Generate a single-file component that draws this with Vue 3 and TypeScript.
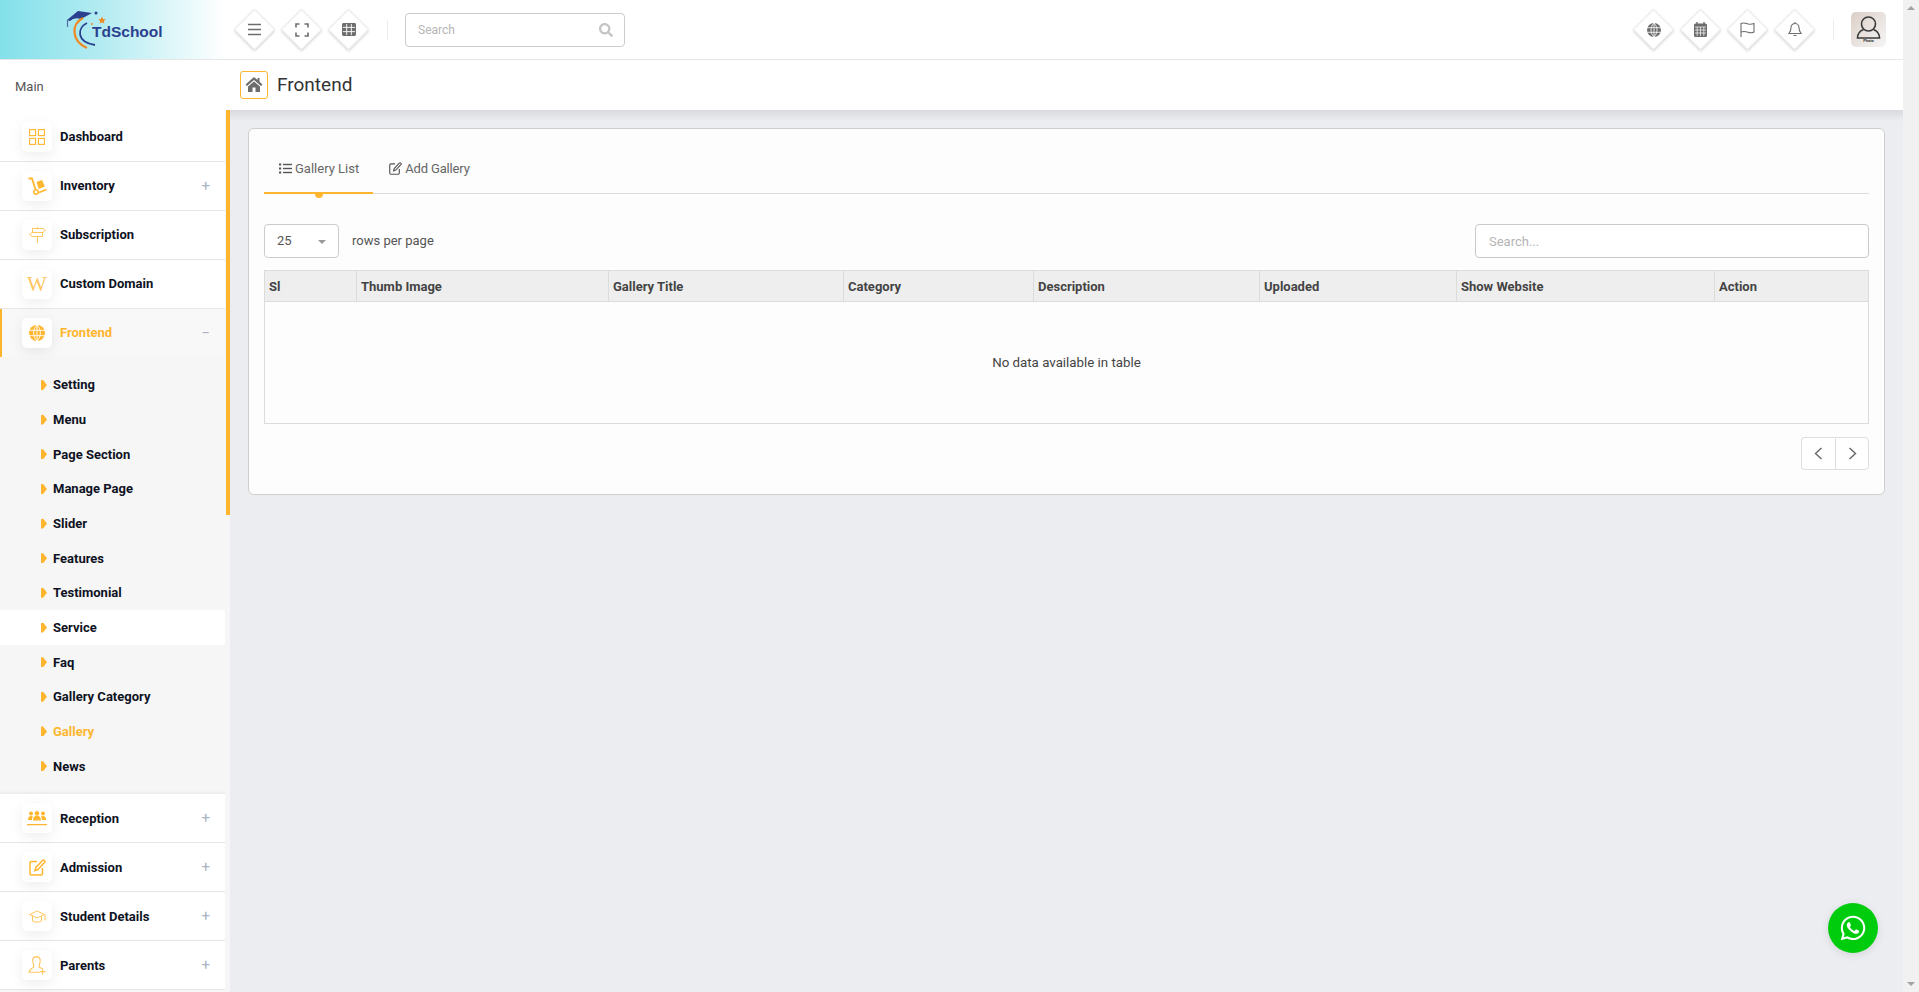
<script setup lang="ts">
type Item = { label: string; icon: string; toggle?: string; active?: boolean };

const topItems: Item[] = [
  { label: 'Dashboard', icon: 'grid' },
  { label: 'Inventory', icon: 'cart', toggle: '+' },
  { label: 'Subscription', icon: 'sign' },
  { label: 'Custom Domain', icon: 'wiki' },
  { label: 'Frontend', icon: 'globe', toggle: '−', active: true },
];
const subItems = ['Setting', 'Menu', 'Page Section', 'Manage Page', 'Slider', 'Features', 'Testimonial', 'Service', 'Faq', 'Gallery Category', 'Gallery', 'News'];
const bottomItems: Item[] = [
  { label: 'Reception', icon: 'people', toggle: '+' },
  { label: 'Admission', icon: 'edit', toggle: '+' },
  { label: 'Student Details', icon: 'cap', toggle: '+' },
  { label: 'Parents', icon: 'parent', toggle: '+' },
];
const columns = ['Sl', 'Thumb Image', 'Gallery Title', 'Category', 'Description', 'Uploaded', 'Show Website', 'Action'];
const columnWidths = [92, 252, 235, 190, 226, 197, 258, 154];
</script>

<template>
  <div class="app">
    <div class="page">
      <header class="topbar">
        <div class="brand">
          <svg class="logo" width="110" height="50" viewBox="0 0 110 50">
            <path d="M3 16 L14 7 L28 9 L17 15 Q10 13 6 17 Z" fill="#2b418f" />
            <path d="M3.500 16 V23" stroke="#5a6aa8" stroke-width="1.200" fill="none" />
            <path d="M19 14 C7 20 7 37 23 44" stroke="#ef8a22" stroke-width="2.200" fill="none" />
            <path d="M23 19 C13 24 12 38 31 41" stroke="#2b418f" stroke-width="1.800" fill="none" />
            <circle cx="32" cy="9" r="1.500" fill="#2b418f" />
            <circle cx="28" cy="20" r="1" fill="#ef8a22" />
            <path d="M38 12.500 l1.100 2.400 2.600.3 -1.900 1.800 .5 2.600 -2.300 -1.300 -2.300 1.300 .5 -2.600 -1.900 -1.800 2.600 -.3 z" fill="#ef8a22" />
            <text x="28" y="33" class="logo-text">TdSchool</text>
          </svg>
        </div>
        <div class="top-tools">
          <div class="tool-group">
            <button class="diamond">
              <svg width="15" height="15" viewBox="0 0 15 15"><path d="M1 2.500h13M1 7.500h13M1 12.500h13" stroke="#6d6d6d" stroke-width="1.600" fill="none" /></svg>
            </button>
            <button class="diamond">
              <svg width="14" height="14" viewBox="0 0 14 14"><path d="M1 4.500V1h3.500M9.500 1H13v3.500M13 9.500V13H9.500M4.500 13H1V9.500" stroke="#6d6d6d" stroke-width="1.600" fill="none" /></svg>
            </button>
            <button class="diamond">
              <svg width="14" height="13" viewBox="0 0 15 14"><rect width="15" height="14" rx="1.500" fill="#6d6d6d" /><path d="M5 1v12M10 1v12M1 4.700h13M1 9.300h13" stroke="#fff" stroke-width="1" /></svg>
            </button>
          </div>
          <span class="vline search-line"></span>
          <label class="top-search">
            <input type="text" placeholder="Search" />
            <svg width="14" height="14" viewBox="0 0 512 512"><path fill="#c4c4c4" d="M505 442.700L405.300 343c-4.500-4.500-10.600-7-17-7H372c27.600-35.300 44-79.700 44-128C416 93.100 322.900 0 208 0S0 93.100 0 208s93.100 208 208 208c48.300 0 92.700-16.400 128-44v16.300c0 6.400 2.500 12.500 7 17l99.700 99.700c9.400 9.400 24.600 9.400 33.900 0l28.300-28.300c9.400-9.400 9.400-24.600.1-34zM208 336c-70.700 0-128-57.200-128-128 0-70.700 57.200-128 128-128 70.700 0 128 57.200 128 128 0 70.700-57.200 128-128 128z" /></svg>
          </label>
          <div class="tool-group push">
            <button class="diamond">
              <svg width="14" height="14" viewBox="0 0 14 14"><circle cx="7" cy="7" r="7" fill="#6d6d6d" /><path d="M0 4.700h14M0 9.300h14M7 0v14M7 0C3 4 3 10 7 14M7 0c4 4 4 10 0 14" stroke="#fff" stroke-width=".8" fill="none" /></svg>
            </button>
            <button class="diamond">
              <svg width="13" height="15" viewBox="0 0 13 15"><rect y="1.500" width="13" height="13.500" rx="1.500" fill="#6d6d6d" /><path d="M3 0v3M10 0v3" stroke="#6d6d6d" stroke-width="1.400" /><path d="M1 5h11M1 8h11M1 11h11M3.200 5v9M6.500 5v9M9.800 5v9" stroke="#fff" stroke-width=".7" /></svg>
            </button>
            <button class="diamond">
              <svg width="15" height="15" viewBox="0 0 15 15"><path d="M1 15V1.500c3-1.500 5 0 7 .5s4 .3 6-.5v8.500c-2 1-4 1-6 .3s-4-1.300-7-.3" stroke="#6d6d6d" stroke-width="1.100" fill="none" /></svg>
            </button>
            <button class="diamond">
              <svg width="14" height="15" viewBox="0 0 14 15"><path d="M7 1.500a4 4 0 0 0-4 4c0 4-1.500 5-2.200 6h12.400c-.7-1-2.200-2-2.200-6a4 4 0 0 0-4-4zM7 0v1.500M5.500 13.500h3" stroke="#6d6d6d" stroke-width="1.100" fill="none" /></svg>
            </button>
          </div>
          <span class="vline avatar-line"></span>
          <div class="avatar">
            <svg width="25" height="23" viewBox="0 0 25 23"><circle cx="12.500" cy="8" r="7" stroke="#3b3b3b" stroke-width="1.600" fill="none" /><path d="M7.500 13.500C4 15 1.500 18.500 1.500 22h22c0-3.500-2.500-7-6-8.500" stroke="#3b3b3b" stroke-width="1.600" fill="none" /></svg>
            <span class="photo">Photo</span>
          </div>
        </div>
      </header>

      <div class="body">
        <aside class="sidebar">
          <span class="side-thumb"></span>
          <div class="main-label">Main</div>
          <a v-for="item in topItems" :key="item.label" class="nav-row" :class="{ active: item.active }">
            <span class="nav-icon">
              <svg v-if="item.icon === 'grid'" width="16" height="16" viewBox="0 0 16 16" fill="none" stroke="#ffb62e" stroke-width="1.100"><rect x=".6" y=".6" width="6" height="6" /><rect x="9.400" y=".6" width="6" height="6" /><rect x=".6" y="9.400" width="6" height="6" /><rect x="9.400" y="9.400" width="6" height="6" /></svg>
              <svg v-else-if="item.icon === 'cart'" width="19" height="18" viewBox="0 0 19 18"><path d="M0.500 1.500H4L7.500 12.500" stroke="#ffb62e" stroke-width="1.800" fill="none" /><circle cx="8" cy="15" r="2.200" stroke="#ffb62e" stroke-width="1.500" fill="none" /><path d="M11 15.500L18.500 12.500" stroke="#ffb62e" stroke-width="1.600" /><path d="M8.500 5L14 3l2.800 6.500-6 2.500z" fill="#ffb62e" /></svg>
              <svg v-else-if="item.icon === 'sign'" width="17" height="16" viewBox="0 0 17 16" fill="none" stroke="#ffc65c" stroke-width="1"><path d="M3.500 1.500h10.500l2.500 2-2.500 2H3.500zM13.500 5.500H3l-2.500 2 2.500 2h10.500zM8.500 0v1.500M8.500 9.500V16" /></svg>
              <span v-else-if="item.icon === 'wiki'" class="wiki">W</span>
              <svg v-else-if="item.icon === 'globe'" width="16" height="16" viewBox="0 0 16 16"><circle cx="8" cy="8" r="8" fill="#ffb62e" /><path d="M0 5.300h16M0 10.700h16M8 0v16M8 0C3.500 4.500 3.500 11.500 8 16M8 0c4.500 4.500 4.500 11.500 0 16" stroke="#fff" stroke-width=".9" fill="none" /></svg>
            </span>
            <span class="nav-label">{{ item.label }}</span>
            <span v-if="item.toggle" class="nav-toggle">{{ item.toggle }}</span>
          </a>
          <ul class="sub-list">
            <li v-for="sub in subItems" :key="sub" class="sub-item" :class="{ hover: sub === 'Service', current: sub === 'Gallery' }">
              <i class="marker"></i>{{ sub }}
            </li>
          </ul>
          <a v-for="item in bottomItems" :key="item.label" class="nav-row lower">
            <span class="nav-icon">
              <svg v-if="item.icon === 'people'" width="20" height="15" viewBox="0 0 20 15"><g fill="#ffb62e"><circle cx="4" cy="2.500" r="2" /><circle cx="10" cy="2.200" r="2.200" /><circle cx="16" cy="2.500" r="2" /><path d="M1 9c0-3 1-4 3-4 1 0 1.500.3 2 .8C5.200 6.500 5 8 5 9zM6 9.500c0-3 1.500-5 4-5s4 2 4 5zM19 9c0-3-1-4-3-4-1 0-1.500.3-2 .8.800.7 1 2.200 1 3.200zM0 13h20v1.300H0z" /></g></svg>
              <svg v-else-if="item.icon === 'edit'" width="17" height="17" viewBox="0 0 17 17" fill="none" stroke="#ffb62e" stroke-width="1.500"><path d="M8 2.500H2.500a1.500 1.500 0 0 0-1.500 1.500v10.500A1.500 1.500 0 0 0 2.500 16H12a1.500 1.500 0 0 0 1.500-1.500V9" /><path d="M6 11.500l.8-3L13.500 1.500a1.300 1.300 0 0 1 2 2L8.900 10.500z" /></svg>
              <svg v-else-if="item.icon === 'cap'" width="17" height="13" viewBox="0 0 17 13" fill="none" stroke="#ffc65c" stroke-width="1"><path d="M.5 4.500L8 1l7.500 3.500L8 8zM3.500 6v5c3 1.500 6 1.500 9 0V6M16 4.500v6" /></svg>
              <svg v-else-if="item.icon === 'parent'" width="18" height="19" viewBox="0 0 16 17" fill="none" stroke="#ffc65c" stroke-width="1"><path d="M5 10V8C3.500 5 3.500 1 7.500 .6 11.500 1 11.500 5 10 8v2c1 .6 2 1 3 1.500M5 10c-2 1-3.500 1.500-4 4.500h9.500" /><path d="M13 11.500v5M10.500 14h5" /></svg>
            </span>
            <span class="nav-label">{{ item.label }}</span>
            <span class="nav-toggle">{{ item.toggle }}</span>
          </a>
        </aside>

        <div class="content-col">
          <div class="subheader">
            <span class="home-box">
              <svg width="18" height="17" viewBox="0 0 18 17"><path fill="#6d6d6d" d="M9 1L.5 8.500 2 10l7-6 7 6 1.500-1.500-3-2.700V2h-2v2zM3 10.500l6-5 6 5V16h-4.500v-4.500h-3V16H3z" /></svg>
            </span>
            <h1>Frontend</h1>
          </div>
          <main class="content">
            <section class="card">
              <nav class="tabs">
                <a class="tab current">
                  <svg width="13" height="11" viewBox="0 0 13 11"><g fill="#555"><rect y=".5" width="2.200" height="2" /><rect y="4.500" width="2.200" height="2" /><rect y="8.500" width="2.200" height="2" /><rect x="4" y=".8" width="9" height="1.400" /><rect x="4" y="4.800" width="9" height="1.400" /><rect x="4" y="8.800" width="9" height="1.400" /></g></svg>
                  Gallery List
                </a>
                <a class="tab">
                  <svg width="13" height="13" viewBox="0 0 17 17" fill="none" stroke="#555" stroke-width="1.500"><path d="M8 2.500H2.500a1.500 1.500 0 0 0-1.500 1.500v10.500A1.500 1.500 0 0 0 2.500 16H12a1.500 1.500 0 0 0 1.500-1.500V9" /><path d="M6 11.500l.8-3L13.500 1.500a1.300 1.300 0 0 1 2 2L8.900 10.500z" /></svg>
                  Add Gallery
                </a>
              </nav>
              <div class="controls">
                <div class="page-size">25<i class="caret"></i></div>
                <span class="rows-label">rows per page</span>
                <input class="table-search" type="text" placeholder="Search..." />
              </div>
              <table class="grid">
                <thead>
                  <tr>
                    <th v-for="(col, i) in columns" :key="col" :style="{ width: columnWidths[i] + 'px' }">{{ col }}</th>
                  </tr>
                </thead>
                <tbody>
                  <tr><td colspan="8">No data available in table</td></tr>
                </tbody>
              </table>
              <div class="pager">
                <button><svg width="9" height="13" viewBox="0 0 9 13"><path d="M7.500 1L1.500 6.500l6 5.500" stroke="#666" stroke-width="1.400" fill="none" /></svg></button>
                <button><svg width="9" height="13" viewBox="0 0 9 13"><path d="M1.500 1l6 5.500-6 5.500" stroke="#666" stroke-width="1.400" fill="none" /></svg></button>
              </div>
            </section>
          </main>
        </div>
      </div>
      <a class="whatsapp">
        <svg width="28" height="28" viewBox="0 0 448 512"><path fill="#fff" d="M380.900 97.100C339 55.100 283.200 32 223.900 32c-122.400 0-222 99.600-222 222 0 39.100 10.200 77.300 29.600 111L0 480l117.700-30.900c32.400 17.700 68.900 27 106.100 27h.1c122.300 0 224.100-99.600 224.100-222 0-59.300-25.200-115-67.100-157zm-157 341.600c-33.200 0-65.700-8.900-94-25.700l-6.700-4-69.800 18.300L72 359.200l-4.400-7c-18.500-29.400-28.200-63.300-28.200-98.200 0-101.700 82.800-184.500 184.600-184.500 49.300 0 95.600 19.200 130.400 54.100 34.800 34.900 56.200 81.200 56.100 130.500 0 101.800-84.900 184.600-186.600 184.600zm101.200-138.200c-5.500-2.800-32.800-16.200-37.900-18-5.100-1.900-8.800-2.800-12.500 2.800-3.700 5.600-14.300 18-17.600 21.800-3.200 3.700-6.500 4.200-12 1.400-32.600-16.300-54-29.100-75.500-66-5.700-9.800 5.700-9.100 16.300-30.300 1.800-3.700.9-6.900-.5-9.700-1.400-2.800-12.500-30.100-17.100-41.200-4.500-10.800-9.100-9.300-12.500-9.500-3.200-.2-6.900-.2-10.600-.2-3.700 0-9.700 1.400-14.800 6.900-5.100 5.600-19.400 19-19.400 46.300 0 27.300 19.900 53.700 22.600 57.400 2.800 3.700 39.100 59.700 94.800 83.800 35.200 15.200 49 16.500 66.600 13.900 10.700-1.600 32.800-13.400 37.400-26.400 4.600-13 4.600-24.100 3.200-26.400-1.300-2.500-5-3.900-10.500-6.600z" /></svg>
      </a>
    </div>
    <div class="scrollbar">
      <i class="arrow up"></i>
      <i class="arrow down"></i>
    </div>
  </div>
</template>

<style scoped>
.app {
  display: flex;
  width: 1919px;
  height: 992px;
  overflow: hidden;
  font-family: Roboto, "Noto Sans", sans-serif;
  color: #444;
  font-size: 14px;
}
.page {
  position: relative;
  flex: 1;
  min-width: 0;
  display: flex;
  flex-direction: column;
  background: #ecedf1;
}
.scrollbar {
  width: 16px;
  background: #f1f1f1;
  display: flex;
  flex-direction: column;
  justify-content: space-between;
  align-items: center;
  padding: 6px 0;
  box-sizing: border-box;
}
.arrow {
  width: 0;
  height: 0;
  border-left: 4px solid transparent;
  border-right: 4px solid transparent;
}
.arrow.up { border-bottom: 4px solid #a3a3a3; }
.arrow.down { border-top: 4px solid #a3a3a3; }

.topbar {
  flex: none;
  height: 60px;
  box-sizing: border-box;
  display: flex;
  background: #fff;
  border-bottom: 1px solid #e6e6e6;
}
.brand {
  flex: none;
  width: 234px;
  background: linear-gradient(90deg, #83e0ea 0%, #b5ecf2 45%, #fff 96%);
  padding: 4px 0 0 64px;
  box-sizing: border-box;
}
.logo { display: block; }
.logo-text {
  font-family: "Liberation Sans", sans-serif;
  font-weight: 700;
  font-size: 15.500px;
  fill: #2b418f;
}
.top-tools {
  flex: 1;
  display: flex;
  align-items: center;
  padding-right: 17px;
}
.tool-group {
  display: flex;
  gap: 6px;
}
.tool-group.push { margin-left: auto; }
.diamond {
  position: relative;
  width: 41px;
  height: 41px;
  padding: 0;
  border: 0;
  background: none;
  display: flex;
  align-items: center;
  justify-content: center;
}
.diamond::before {
  content: "";
  position: absolute;
  left: 6px;
  top: 6px;
  width: 29px;
  height: 29px;
  box-sizing: border-box;
  transform: rotate(45deg);
  background: #fff;
  border: 1px solid #eeeeee;
  box-shadow: 1px 1px 3px rgba(0, 0, 0, 0.16), 0 0 2px rgba(0, 0, 0, 0.08);
}
.diamond svg { position: relative; }
.vline {
  width: 1px;
  height: 20px;
  background: #ececec;
}
.search-line { margin: 0 17px 0 18px; }
.avatar-line { margin: 0 17px 0 18px; }
.top-search {
  width: 220px;
  height: 34px;
  box-sizing: border-box;
  border: 1px solid #ccc;
  border-radius: 4px;
  display: flex;
  align-items: center;
  padding: 0 11px 0 12px;
}
.top-search input {
  flex: 1;
  min-width: 0;
  border: 0;
  outline: 0;
  padding: 0;
  font: 12px Roboto, sans-serif;
  background: none;
}
.top-search input::placeholder { color: #b5b5b5; }
.avatar {
  position: relative;
  width: 35px;
  height: 35px;
  border-radius: 5px;
  background: linear-gradient(135deg, #dccfc8, #f5f5f5);
  display: flex;
  justify-content: center;
  padding-top: 4px;
  box-sizing: border-box;
}
.photo {
  position: absolute;
  left: 0;
  right: 0;
  bottom: 4px;
  text-align: center;
  font-size: 4px;
  font-weight: 700;
  line-height: 4px;
  color: #333;
}

.body {
  flex: 1;
  min-height: 0;
  display: flex;
}
.sidebar {
  position: relative;
  flex: none;
  width: 230px;
  background: #f6f6f6;
  overflow: hidden;
}
.side-thumb {
  position: absolute;
  left: 226px;
  top: 50px;
  width: 4px;
  height: 405px;
  background: #ffb62e;
}
.main-label {
  height: 53px;
  box-sizing: border-box;
  padding: 18px 15px 0;
  font-size: 13px;
  line-height: 17px;
  color: #555;
  background: #fff;
}
.nav-row {
  display: flex;
  align-items: center;
  width: 225px;
  height: 49px;
  box-sizing: border-box;
  border-bottom: 1px solid #e6e6e6;
  padding: 0 15px 0 22px;
  font-size: 13px;
  font-weight: 700;
  color: #0e1222;
  background: #fff;
}
.nav-icon {
  width: 30px;
  height: 30px;
  flex: none;
  border-radius: 5px;
  background: #fff;
  box-shadow: 0 4px 14px rgba(0, 0, 0, 0.07);
  display: flex;
  align-items: center;
  justify-content: center;
  margin-right: 8px;
}
.wiki {
  font-family: "Liberation Serif", serif;
  font-size: 21px;
  font-weight: 400;
  color: #ffc65c;
  line-height: 1;
}
.nav-label {
  flex: 1;
  padding-bottom: 1px;
}
.nav-row.lower .nav-label {
  padding-bottom: 0;
  padding-top: 1px;
}
.nav-toggle {
  color: #a9b3c4;
  font-size: 15px;
  font-weight: 400;
}
.nav-row.active {
  background: #f8f8f8;
  border-bottom: 0;
  box-shadow: inset 2px 0 0 #ffb62e;
  height: 48px;
}
.nav-row.active .nav-label { color: #ffb62e; }
.sub-list {
  list-style: none;
  margin: 0;
  width: 225px;
  padding: 10.600px 0 11px;
  background: #f6f6f6;
  box-shadow: inset 0 -4px 4px -4px rgba(0, 0, 0, 0.1);
}
.sub-item {
  height: 34.670px;
  display: flex;
  align-items: center;
  padding-left: 41px;
  font-size: 13px;
  font-weight: 700;
  color: #0e1222;
}
.sub-item.hover { background: #fff; }
.sub-item.current { color: #ffb62e; }
.marker {
  width: 6px;
  height: 10px;
  margin-right: 6px;
  background: #ffb62e;
  clip-path: polygon(0 0, 35% 0, 100% 50%, 35% 100%, 0 100%);
}

.content-col {
  flex: 1;
  min-width: 0;
  display: flex;
  flex-direction: column;
}
.subheader {
  flex: none;
  height: 50px;
  box-sizing: border-box;
  background: #fff;
  display: flex;
  align-items: center;
  padding-left: 10px;
  padding-bottom: 1px;
}
.home-box {
  width: 28px;
  height: 28px;
  box-sizing: border-box;
  border: 1px solid #ffb62e;
  border-radius: 3px;
  display: flex;
  align-items: center;
  justify-content: center;
  margin-right: 9px;
}
.subheader h1 {
  margin: 0;
  font-size: 19px;
  font-weight: 400;
  color: #333;
}
.content {
  flex: 1;
  padding: 18px 18px 0 18px;
  background: linear-gradient(#d9dadd, #ecedf1 11px);
}
.card {
  box-sizing: border-box;
  height: 367px;
  padding: 15px;
  background: #fdfdfd;
  border: 1px solid #cfcfcf;
  border-radius: 6px;
}
.tabs {
  display: flex;
  height: 50px;
  box-sizing: border-box;
  border-bottom: 1px solid #dcdcdc;
}
.tab {
  position: relative;
  display: flex;
  align-items: center;
  gap: 3px;
  height: 50px;
  padding: 0 15px;
  box-sizing: border-box;
  border-bottom: 2px solid transparent;
  font-size: 13px;
  color: #666;
}
.tab.current {
  border-bottom-color: #ffb62e;
  padding-right: 14px;
}
.tab:not(.current) {
  letter-spacing: -0.150px;
  padding-left: 16px;
}
.tab.current::after {
  content: "";
  position: absolute;
  left: 50%;
  bottom: -6px;
  width: 8px;
  height: 4px;
  margin-left: -4px;
  border-radius: 0 0 4px 4px;
  background: #ffb62e;
}
.controls {
  display: flex;
  align-items: center;
  margin-top: 30px;
  height: 34px;
}
.page-size {
  position: relative;
  width: 75px;
  height: 34px;
  box-sizing: border-box;
  border: 1px solid #ccc;
  border-radius: 4px;
  padding-left: 12px;
  line-height: 32px;
  font-size: 13px;
  color: #555;
  background: #fff;
}
.caret {
  position: absolute;
  right: 12px;
  top: 15px;
  border-left: 4px solid transparent;
  border-right: 4px solid transparent;
  border-top: 4px solid #999;
}
.rows-label {
  margin-left: 13px;
  font-size: 13px;
  color: #555;
  position: relative;
  top: -1px;
}
.table-search {
  margin-left: auto;
  width: 394px;
  height: 34px;
  box-sizing: border-box;
  border: 1px solid #c9c9c9;
  border-radius: 4px;
  padding: 0 13px;
  font: 13px Roboto, sans-serif;
  background: #fff;
}
.table-search::placeholder { color: #b5b5b5; }
.grid {
  width: 1604px;
  margin-top: 12px;
  border-collapse: collapse;
  table-layout: fixed;
  border: 1px solid #dcdcdc;
}
.grid th {
  height: 31px;
  padding: 0 4px;
  box-sizing: border-box;
  text-align: left;
  background: #eeeeee;
  border: 1px solid #dcdcdc;
  font-size: 13px;
  font-weight: 700;
  color: #444;
}
.grid td {
  height: 119px;
  text-align: center;
  font-size: 13.300px;
  color: #444;
}
.pager {
  display: flex;
  justify-content: flex-end;
  margin-top: 13px;
}
.pager button {
  width: 34px;
  height: 33px;
  padding: 0;
  background: #fff;
  border: 1px solid #dedede;
  display: flex;
  align-items: center;
  justify-content: center;
}
.pager button:first-child { border-radius: 4px 0 0 4px; border-right: 0; }
.pager button:last-child { border-radius: 0 4px 4px 0; }
.whatsapp {
  position: absolute;
  left: 1828px;
  top: 903px;
  width: 50px;
  height: 50px;
  border-radius: 50%;
  background: #00cc0e;
  box-shadow: 0 2px 8px rgba(0, 0, 0, 0.1);
  display: flex;
  align-items: center;
  justify-content: center;
}
</style>
